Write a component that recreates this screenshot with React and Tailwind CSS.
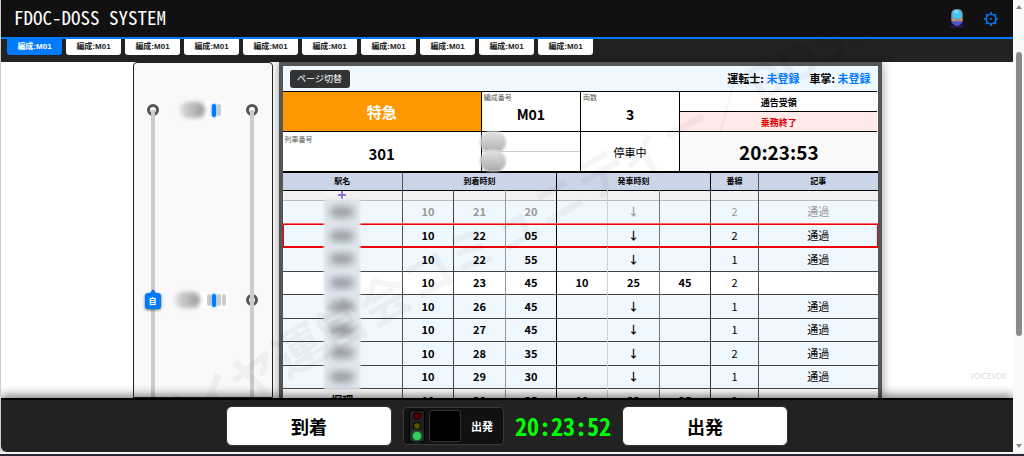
import React, { useState } from 'react';

const tabs = Array.from({ length: 10 }, (_, i) => ({ id: i, label: '編成:M01' }));

const rows = [
  { arr: ['10', '21', '20'], dep: ['', '↓', ''], track: '2', note: '通過', state: 'past' },
  { arr: ['10', '22', '05'], dep: ['', '↓', ''], track: '2', note: '通過', state: 'current' },
  { arr: ['10', '22', '55'], dep: ['', '↓', ''], track: '1', note: '通過' },
  { arr: ['10', '23', '45'], dep: ['10', '25', '45'], track: '2', note: '' },
  { arr: ['10', '26', '45'], dep: ['', '↓', ''], track: '1', note: '通過' },
  { arr: ['10', '27', '45'], dep: ['', '↓', ''], track: '1', note: '通過' },
  { arr: ['10', '28', '35'], dep: ['', '↓', ''], track: '2', note: '通過' },
  { arr: ['10', '29', '30'], dep: ['', '↓', ''], track: '1', note: '通過' },
  { name: '堀理', arr: ['10', '30', '35'], dep: ['10', '33', '35'], track: '2', note: '' },
];

const rowStates = {
  past: 'border-b-2 border-b-[#f66] text-[#999]',
  current: 'border-b border-b-[#e00] text-black outline -outline-offset-1 outline-[#e00]',
  next: 'border-b border-b-[#444] text-black',
};

// right-hand rule of every column, heavier between the groups
const rules = [
  'border-r border-r-[#555]',
  'border-r border-r-[#444]',
  'border-r border-r-[#999]',
  'border-r border-r-black',
  'border-r border-r-[#ccd2d8]',
  'border-r border-r-[#777]',
  'border-r border-r-[#333]',
  'border-r border-r-[#555]',
  '',
];

const TrainIcon = () => (
  <svg width="14" height="20" viewBox="0 0 14 20">
    <rect x="0.5" y="16.5" width="13" height="2.5" fill="#2c1650" />
    <path d="M7 0C10.500 0 12.500 1.500 12.800 5V11C12.500 14.500 9.500 16.500 7 16.500S1.500 14.500 1.200 11V5C1.500 1.500 3.500 0 7 0Z" fill="#8d8a9c" />
    <path d="M1.500 11.500C3 13 11 13 12.500 11.500C12 14.500 9.500 16.500 7 16.500S2 14.500 1.500 11.500Z" fill="#4a50d8" />
    <rect x="2.500" y="0.800" width="9" height="9" rx="3.500" fill="#3fc4ee" />
    <rect x="4" y="1.500" width="5" height="3" rx="1.500" fill="#7ce0f7" />
    <circle cx="3.500" cy="11" r="1.300" fill="#f39a1e" />
    <circle cx="10.500" cy="11" r="1.300" fill="#f39a1e" />
  </svg>
);

const GearIcon = () => (
  <svg width="14" height="14" viewBox="0 0 14 14" fill="none" stroke="#007bff">
    <circle cx="7" cy="7" r="4.900" strokeWidth="1.400" />
    <circle cx="7" cy="7" r="1" fill="#007bff" stroke="none" />
    <path
      strokeWidth="1.700"
      d="M7 0V2M7 12V14M0 7H2M12 7H14M2.100 2.100L3.500 3.500M10.500 10.500L11.900 11.900M2.100 11.900L3.500 10.500M10.500 3.500L11.900 2.100"
    />
  </svg>
);

const Ring = ({ top }) => (
  <span className={`absolute -left-1 -z-10 size-3 rounded-full border-3 border-[#555] bg-white ${top}`} />
);

const StationLabel = ({ cars, active }) => (
  <div className="flex h-[22px] items-center">
    <span className="relative z-10 h-4 w-[25px] rounded-full bg-linear-to-r from-[#ddd] to-[#999] blur-[2px]" />
    <div className="flex h-[18px] items-center gap-px bg-white pr-[3px] pl-[7px]">
      {Array.from({ length: cars }, (_, i) => (
        <span
          key={i}
          className={
            i === active
              ? 'h-[13px] w-1 rounded-xs bg-[#007bff] shadow-[0_0_3px_#007bff]'
              : 'h-3 w-1 rounded-xs bg-[#ccc]'
          }
        />
      ))}
    </div>
  </div>
);

const LineMap = () => (
  <aside className="relative isolate flex w-[140px] shrink-0 justify-between overflow-hidden rounded-t border border-[#222] bg-[#f9f9f9] pt-9 pr-[18px] pl-[17px]">
    <div className="relative mt-[11px] w-1 bg-[#ccc]">
      <Ring top="-top-1.5" />
      <div className="absolute top-[183px] -left-1.5 flex size-4 items-center justify-center rounded-[3px] bg-[#007bff] text-[8px] font-bold text-white shadow-[0_1px_3px_rgba(0,0,0,0.6)]">
        <span className="absolute -top-1 border-x-3 border-b-4 border-x-transparent border-b-[#007bff]" />
        自
      </div>
    </div>
    <div className="flex flex-col items-center gap-[168px]">
      <StationLabel cars={2} active={0} />
      <StationLabel cars={4} active={1} />
    </div>
    <div className="relative mt-[11px] w-1 bg-[#ccc]">
      <Ring top="-top-1.5" />
      <Ring top="top-[184px]" />
    </div>
  </aside>
);

const InfoPanel = () => (
  <div className="grid grid-cols-6 grid-rows-2 bg-white text-center font-bold">
    <div className="col-span-2 flex h-10 items-center justify-center border-t border-black bg-[#ff9800] pt-0.5 text-[15px] text-white">
      特急
    </div>
    <div className="relative flex items-center justify-center border-t border-l border-black pt-1.5 text-[14px]">
      <span className="absolute top-0.5 left-0.5 text-[7px] leading-none font-normal text-[#555]">編成番号</span>
      M01
    </div>
    <div className="relative flex items-center justify-center border-t border-l border-black pt-1.5 text-[14px]">
      <span className="absolute top-0.5 left-0.5 text-[7px] leading-none font-normal text-[#555]">両数</span>
      3
    </div>
    <div className="col-span-2 flex flex-col border-t border-l border-black text-[9px]">
      <button type="button" className="flex-1 bg-white pt-0.5">通告受領</button>
      <button type="button" className="flex-1 border-t border-black bg-[#ffe9e9] pt-0.5 text-[#d00]">乗務終了</button>
    </div>
    <div className="relative col-span-2 flex h-10 items-center justify-center border-t border-black pt-1.5 text-[15px]">
      <span className="absolute top-1 left-0.5 text-[7px] leading-none font-normal text-[#555]">列車番号</span>
      301
    </div>
    <div className="relative flex flex-col border-t border-l border-black">
      <div className="flex-1 border-b border-[#ccc]" />
      <div className="flex-1" />
      <span className="absolute -top-px -left-0.5 h-[22px] w-[26px] rounded-full bg-linear-to-b from-[#e4e4e4] to-[#b0b0b0] blur-[1px]" />
      <span className="absolute -bottom-px -left-0.5 h-[22px] w-[26px] rounded-full bg-linear-to-b from-[#e4e4e4] to-[#aaa] blur-[1px]" />
    </div>
    <div className="flex items-center justify-center border-t border-l border-black pt-0.5 text-[11px] font-normal">
      停車中
    </div>
    <div className="col-span-2 flex items-center justify-center border-t border-l border-black bg-[#f9f9f9] pt-0.5 text-[19px]">
      20:23:53
    </div>
  </div>
);

const BlurredName = () => (
  <span className="absolute inset-y-0 left-[41px] flex w-9 items-center justify-center">
    <span className="absolute -inset-y-0.5 inset-x-0 bg-[#e2e8ef] blur-[1px]" />
    <span className="relative h-2.5 w-6 rounded-full bg-[#8d9298] blur-[4px]" />
  </span>
);

const TimeTable = () => (
  <table className="w-full table-fixed border-collapse text-center text-[11px] leading-none">
    <colgroup>
      <col className="w-[120px]" />
      <col className="w-[51px]" />
      <col className="w-[52px]" />
      <col className="w-[51px]" />
      <col className="w-[51px]" />
      <col className="w-[52px]" />
      <col className="w-[51px]" />
      <col className="w-12" />
      <col />
    </colgroup>
    <thead>
      <tr className="h-[18px] border-t-2 border-b border-black bg-[#cbd5e8] text-[8px]">
        <th className="border-r border-r-[#555] p-0">駅名</th>
        <th colSpan={3} className="border-r border-black p-0">到着時刻</th>
        <th colSpan={3} className="border-r border-black p-0">発車時刻</th>
        <th className="border-r border-r-[#555] p-0">番線</th>
        <th className="p-0">記事</th>
      </tr>
    </thead>
    <tbody>
      <tr className="h-2.5 border-b border-[#bbb] bg-[#f2f0f0]">
        <td className="border-r border-r-[#555] p-0">
          <svg width="8" height="8" viewBox="0 0 8 8" className="mx-auto">
            <path d="M4 0V8M0 4H8" stroke="#8f74c9" strokeWidth="2" />
          </svg>
        </td>
        {rules.slice(1).map((rule, i) => (
          <td key={i} className={`p-0 ${rule}`} />
        ))}
      </tr>
      {rows.map((row, i) => {
        const bg = row.dep[0] ? 'bg-white' : 'bg-[#f0f8ff]';
        return (
          <tr key={i} className={`odd:h-[23px] even:h-6 ${bg} ${rowStates[row.state || 'next']}`}>
            <td className={`relative p-0 font-bold ${rules[0]}`}>{row.name || <BlurredName />}</td>
            {[...row.arr, ...row.dep].map((value, j) => (
              <td key={j} className={`p-0 font-bold ${rules[j + 1]}`}>{value}</td>
            ))}
            <td className={`p-0 ${rules[7]}`}>{row.track}</td>
            <td className="p-0">{row.note}</td>
          </tr>
        );
      })}
    </tbody>
  </table>
);

const Footer = () => (
  <footer className="relative z-10 flex h-[54px] shrink-0 items-center justify-center gap-[11px] rounded-bl-md border-t-2 border-black bg-[#222] shadow-[0_-3px_10px_rgba(0,0,0,0.5)]">
    <button type="button" className="h-10 w-[166px] rounded-md border border-[#333] bg-white text-[18px] font-bold">
      到着
    </button>
    <div className="flex h-[38px] w-[101px] items-center rounded border border-[#3a3a3a] bg-[#111] pl-[5px]">
      <div className="flex h-8 w-4 flex-col items-center justify-center gap-0.5 rounded-xs border border-black bg-[#222]">
        <span className="size-2 rounded-full border border-black bg-[#500]" />
        <span className="size-2 rounded-full border border-black bg-[#550]" />
        <span className="size-2 rounded-full bg-[#33d060] shadow-[0_0_4px_#33d060]" />
      </div>
      <div className="ml-1 size-8 rounded-[3px] border border-[#333] bg-black" />
      <span className="flex-1 text-center text-[11px] font-bold text-white">出発</span>
    </div>
    <div className="font-['Noto_Sans_Mono_CJK_JP','Noto_Sans_CJK_JP',monospace] text-[24px] leading-none font-bold text-[#0f0]">
      20:23:52
    </div>
    <button type="button" className="h-10 w-[166px] rounded-md border border-[#333] bg-white text-[18px] font-bold">
      出発
    </button>
  </footer>
);

const ScrollBar = () => (
  <div className="flex w-[11px] shrink-0 flex-col items-center justify-between bg-[#fafafa] py-1">
    <span className="mt-px border-x-3 border-b-4 border-x-transparent border-b-[#888]" />
    <div className="w-1.5 flex-1 pt-[43px] pb-[108px]">
      <div className="h-full rounded-full bg-[#8b8b8b]" />
    </div>
    <span className="border-x-3 border-t-4 border-x-transparent border-t-[#888]" />
  </div>
);

export default function App() {
  const [activeTab, setActiveTab] = useState(0);

  return (
    <div className="flex h-screen flex-col border-b-2 border-[#2a2638] bg-[#f4f0f4] pb-0.5 font-['Noto_Sans_CJK_JP',sans-serif] text-black">
      <div className="flex min-h-0 flex-1">
        <div className="relative flex min-w-0 flex-1 flex-col overflow-hidden border-l border-[#ccc]">
          <header className="relative z-10 flex h-[39px] shrink-0 items-center justify-between border-b-2 border-[#007bff] bg-[#111] pr-[15px] pb-1 pl-[13px]">
            <h1 className="font-['Noto_Sans_Mono_CJK_JP','Noto_Sans_CJK_JP',monospace] text-[19px] leading-none text-white">
              FDOC-DOSS SYSTEM
            </h1>
            <div className="flex items-center gap-5 pt-1">
              <button type="button" aria-label="train"><TrainIcon /></button>
              <button type="button" aria-label="settings"><GearIcon /></button>
            </div>
          </header>

          <nav className="flex h-[23px] shrink-0 items-start gap-1 bg-[#222] pl-1.5">
            {tabs.map((tab) => (
              <button
                key={tab.id}
                type="button"
                onClick={() => setActiveTab(tab.id)}
                className={`h-4 w-[55px] rounded-b-[3px] font-['Liberation_Sans','Noto_Sans_CJK_JP',sans-serif] text-[8px] leading-none font-bold ${
                  tab.id === activeTab ? 'bg-[#007bff] text-white' : 'bg-white text-[#222]'
                }`}
              >
                {tab.label}
              </button>
            ))}
          </nav>

          <main className="relative flex min-h-0 flex-1 justify-center gap-1.5 bg-white">
            <LineMap />
            <section className="w-full max-w-[603px] overflow-hidden border-4 border-b-0 border-[#555] shadow-[0_0_10px_rgba(0,0,0,0.4)]">
              <div className="flex h-[25px] items-center justify-between bg-[#f0f8ff] px-[7px] text-[11px] font-bold">
                <button type="button" className="h-[18px] w-[60px] rounded-[3px] bg-[#333] text-[9px] font-normal text-white">
                  ページ切替
                </button>
                <div className="flex gap-2.5">
                  <span>運転士: <span className="text-[#007bff]">未登録</span></span>
                  <span>車掌: <span className="text-[#007bff]">未登録</span></span>
                </div>
              </div>
              <InfoPanel />
              <TimeTable />
            </section>
            <span className="absolute right-[7px] bottom-4 text-[8px] font-light text-[#ccc]">VOICEVOX</span>
          </main>

          {/* watermark */}
          <div className="pointer-events-none absolute inset-0 flex items-center justify-center overflow-hidden">
            <span className="-rotate-30 text-[50px] font-bold whitespace-nowrap text-black/4">
              ダイヤ運営会コミュニティー／DOSS
            </span>
          </div>

          <Footer />
        </div>
        <ScrollBar />
      </div>
    </div>
  );
}
